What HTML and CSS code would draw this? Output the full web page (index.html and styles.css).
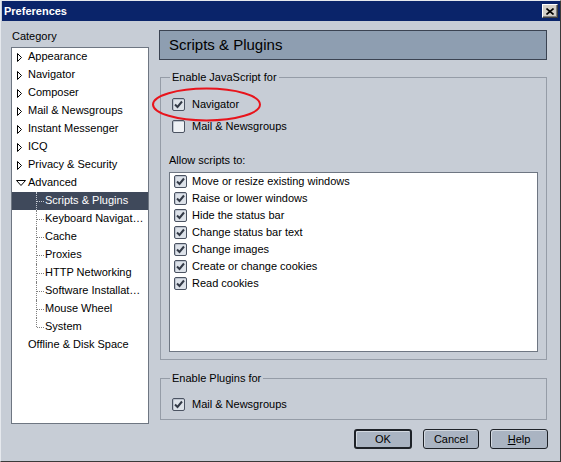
FILE: index.html
```html
<!DOCTYPE html>
<html>
<head>
<meta charset="utf-8">
<title>Preferences</title>
<link rel="stylesheet" href="styles.css">
</head>
<body>
<div class="window">
  <div class="titlebar">
    <span class="title">Preferences</span>
    <span class="close"><svg width="8" height="7" viewBox="0 0 8 7"><path d="M0.5 0.5 L7.5 6.5 M7.5 0.5 L0.5 6.5" stroke="#000" stroke-width="1.6" fill="none"/></svg></span>
  </div>
  <div class="content">
    <div class="left">
      <div class="cat-label">Category</div>
      <div class="tree">
        <div class="row"><svg class="tw" viewBox="0 0 5 9"><polygon points="0.5,0.5 4.5,4.5 0.5,8.5" fill="#fff" stroke="#000" stroke-width="1"/></svg>Appearance</div>
        <div class="row"><svg class="tw" viewBox="0 0 5 9"><polygon points="0.5,0.5 4.5,4.5 0.5,8.5" fill="#fff" stroke="#000" stroke-width="1"/></svg>Navigator</div>
        <div class="row"><svg class="tw" viewBox="0 0 5 9"><polygon points="0.5,0.5 4.5,4.5 0.5,8.5" fill="#fff" stroke="#000" stroke-width="1"/></svg>Composer</div>
        <div class="row"><svg class="tw" viewBox="0 0 5 9"><polygon points="0.5,0.5 4.5,4.5 0.5,8.5" fill="#fff" stroke="#000" stroke-width="1"/></svg>Mail &amp; Newsgroups</div>
        <div class="row"><svg class="tw" viewBox="0 0 5 9"><polygon points="0.5,0.5 4.5,4.5 0.5,8.5" fill="#fff" stroke="#000" stroke-width="1"/></svg>Instant Messenger</div>
        <div class="row"><svg class="tw" viewBox="0 0 5 9"><polygon points="0.5,0.5 4.5,4.5 0.5,8.5" fill="#fff" stroke="#000" stroke-width="1"/></svg>ICQ</div>
        <div class="row"><svg class="tw" viewBox="0 0 5 9"><polygon points="0.5,0.5 4.5,4.5 0.5,8.5" fill="#fff" stroke="#000" stroke-width="1"/></svg>Privacy &amp; Security</div>
        <div class="row open"><svg class="tw" viewBox="0 0 10 6"><polygon points="0.5,0.5 9.5,0.5 5,5.5" fill="#fff" stroke="#000" stroke-width="1"/></svg>Advanced</div>
        <div class="children">
          <div class="child selected">Scripts &amp; Plugins</div>
          <div class="child">Keyboard Navigat…</div>
          <div class="child">Cache</div>
          <div class="child">Proxies</div>
          <div class="child">HTTP Networking</div>
          <div class="child">Software Installat…</div>
          <div class="child">Mouse Wheel</div>
          <div class="child">System</div>
        </div>
        <div class="row leaf">Offline &amp; Disk Space</div>
      </div>
    </div>
    <div class="right">
      <div class="header">Scripts &amp; Plugins</div>
      <fieldset class="group js">
        <legend>Enable JavaScript for</legend>
        <div class="opt"><span class="cb checked"><svg width="11" height="11" viewBox="0 0 11 11"><path d="M2 5.5 L4.5 8 L9 2.5" stroke="#333a47" stroke-width="2" fill="none"/></svg></span>Navigator</div>
        <div class="opt"><span class="cb"></span>Mail &amp; Newsgroups</div>
        <div class="allow-label">Allow scripts to:</div>
        <div class="list">
          <div class="item"><span class="cb checked"><svg width="11" height="11" viewBox="0 0 11 11"><path d="M2 5.5 L4.5 8 L9 2.5" stroke="#333a47" stroke-width="2" fill="none"/></svg></span>Move or resize existing windows</div>
          <div class="item"><span class="cb checked"><svg width="11" height="11" viewBox="0 0 11 11"><path d="M2 5.5 L4.5 8 L9 2.5" stroke="#333a47" stroke-width="2" fill="none"/></svg></span>Raise or lower windows</div>
          <div class="item"><span class="cb checked"><svg width="11" height="11" viewBox="0 0 11 11"><path d="M2 5.5 L4.5 8 L9 2.5" stroke="#333a47" stroke-width="2" fill="none"/></svg></span>Hide the status bar</div>
          <div class="item"><span class="cb checked"><svg width="11" height="11" viewBox="0 0 11 11"><path d="M2 5.5 L4.5 8 L9 2.5" stroke="#333a47" stroke-width="2" fill="none"/></svg></span>Change status bar text</div>
          <div class="item"><span class="cb checked"><svg width="11" height="11" viewBox="0 0 11 11"><path d="M2 5.5 L4.5 8 L9 2.5" stroke="#333a47" stroke-width="2" fill="none"/></svg></span>Change images</div>
          <div class="item"><span class="cb checked"><svg width="11" height="11" viewBox="0 0 11 11"><path d="M2 5.5 L4.5 8 L9 2.5" stroke="#333a47" stroke-width="2" fill="none"/></svg></span>Create or change cookies</div>
          <div class="item"><span class="cb checked"><svg width="11" height="11" viewBox="0 0 11 11"><path d="M2 5.5 L4.5 8 L9 2.5" stroke="#333a47" stroke-width="2" fill="none"/></svg></span>Read cookies</div>
        </div>
      </fieldset>
      <fieldset class="group plugins">
        <legend>Enable Plugins for</legend>
        <div class="opt"><span class="cb checked"><svg width="11" height="11" viewBox="0 0 11 11"><path d="M2 5.5 L4.5 8 L9 2.5" stroke="#333a47" stroke-width="2" fill="none"/></svg></span>Mail &amp; Newsgroups</div>
      </fieldset>
      <div class="buttons">
        <button class="btn default">OK</button>
        <button class="btn cancel">Cancel</button>
        <button class="btn"><span class="ul">H</span>elp</button>
      </div>
    </div>
  </div>
  <svg class="annot" width="114" height="38" viewBox="0 0 114 38"><ellipse cx="56.5" cy="18.5" rx="53.5" ry="16" fill="none" stroke="#e8141c" stroke-width="2"/></svg>
</div>
</body>
</html>
```

FILE: styles.css
```css
html, body {
  margin: 0;
  padding: 0;
}
body {
  width: 561px;
  height: 462px;
  overflow: hidden;
  font-family: "Liberation Sans", Arial, sans-serif;
  font-size: 11px;
  color: #000;
  background: #c7cdd6;
}
.window {
  box-sizing: border-box;
  width: 561px;
  height: 462px;
  border: 1px solid;
  border-color: #e6e9ee #3a3a3a #3a3a3a #e6e9ee;
  background: #c7cdd6;
  position: relative;
}
.titlebar {
  height: 20px;
  margin-left: 1px;
  background: #0a246a;
  color: #fff;
  font-weight: bold;
  display: flex;
  align-items: center;
  justify-content: space-between;
  padding: 0 2px 0 2px;
}
.title {
  line-height: 20px;
}
.close {
  box-sizing: border-box;
  width: 16px;
  height: 14px;
  background: #d4d0c8;
  border: 1px solid;
  border-color: #fff #404040 #404040 #fff;
  box-shadow: inset -1px -1px 0 #808080;
  display: flex;
  align-items: center;
  justify-content: center;
}
.content {
  display: flex;
  gap: 10px;
  padding: 8px 0 0 10px;
}
.left {
  width: 138px;
}
.cat-label {
  height: 18px;
  line-height: 15px;
  padding-left: 1px;
}
.tree {
  box-sizing: border-box;
  height: 377px;
  border: 1px solid #6e7682;
  background: #fff;
  overflow: hidden;
}
.row {
  box-sizing: border-box;
  height: 18px;
  display: flex;
  align-items: center;
  white-space: nowrap;
  padding-left: 5px;
  padding-bottom: 2px;
}
.tw {
  width: 5px;
  height: 9px;
  margin-right: 6px;
  flex: none;
  position: relative;
  top: 1px;
}
.row.open {
  padding-left: 4px;
}
.row.open .tw {
  width: 10px;
  height: 6px;
  margin-right: 2px;
}
.row.leaf {
  padding-left: 16px;
}
.child {
  box-sizing: border-box;
  height: 18px;
  display: flex;
  align-items: center;
  white-space: nowrap;
  overflow: hidden;
  padding-left: 33px;
  padding-bottom: 2px;
  position: relative;
}
.child::before {
  content: "";
  position: absolute;
  left: 24px;
  top: 0;
  bottom: 0;
  border-left: 1px dotted #808080;
}
.child::after {
  content: "";
  position: absolute;
  left: 25px;
  top: 9px;
  width: 7px;
  border-top: 1px dotted #808080;
}
.child:last-child::before {
  bottom: 9px;
}
.child.selected {
  background: #3f495b;
  color: #fff;
}
.child.selected::before,
.child.selected::after {
  border-color: #c4c9d2;
}
.right {
  width: 388px;
  display: flex;
  flex-direction: column;
}
.header {
  box-sizing: border-box;
  height: 30px;
  margin-top: 1px;
  border: 1px solid #3b4352;
  background: #8e9eb1;
  font-size: 15px;
  line-height: 28px;
  padding-left: 9px;
}
.group {
  box-sizing: border-box;
  width: 387px;
  min-width: 0;
  margin: 10px 0 0 1px;
  border: 1px solid #959ca7;
  padding: 9px 8px 7px 8px;
}
.group legend {
  padding: 0 2px;
  margin-left: 1px;
  line-height: 14px;
}
.group.plugins {
  margin-top: 11px;
  padding: 8px 8px 4px 8px;
}
.opt {
  height: 22px;
  display: flex;
  align-items: center;
  margin-left: 3px;
}
.opt .cb {
  margin-right: 7px;
}
.cb {
  box-sizing: border-box;
  width: 13px;
  height: 13px;
  flex: none;
  border: 1px solid #4b5362;
  border-radius: 2px;
  background: #eef1f5;
  box-shadow: inset 1px 1px 0 #bcc3ce;
  display: inline-flex;
  align-items: center;
  justify-content: center;
}
.cb.checked {
  background: #dde2e9;
}
.allow-label {
  height: 18px;
  line-height: 17px;
  margin-top: 15px;
}
.list {
  box-sizing: border-box;
  height: 180px;
  margin-top: 2px;
  border: 1px solid #6e7682;
  background: #fff;
  padding: 0 4px;
}
.item {
  box-sizing: border-box;
  height: 17px;
  display: flex;
  align-items: center;
  white-space: nowrap;
  padding-bottom: 1px;
}
.item .cb {
  margin-right: 5px;
}
.buttons {
  display: flex;
  justify-content: flex-end;
  gap: 11px;
  margin-top: 9px;
  margin-right: -1px;
}
.btn {
  box-sizing: border-box;
  width: 58px;
  height: 20px;
  padding: 0;
  border: 1px solid #1e2228;
  border-radius: 3px;
  background: #aab4c2;
  box-shadow: inset 1px 1px 0 #d3d9e1;
  font-family: inherit;
  font-size: 11px;
  color: #000;
}
.btn.default {
  border-width: 2px;
}
.btn.cancel {
  width: 56px;
}
.ul {
  text-decoration: underline;
}
.annot {
  position: absolute;
  left: 149px;
  top: 85px;
}
```
